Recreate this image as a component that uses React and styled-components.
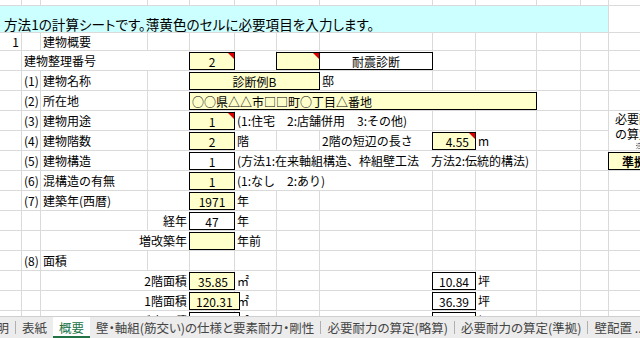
import React from 'react';
import styled, { createGlobalStyle, css } from 'styled-components';

const GRID = '#dadada';
const YELLOW = '#ffffcc';
const FONT = `"Noto Sans CJK JP", "Noto Sans", sans-serif`;

const COLS = [22, 19, 107, 42, 45, 42, 43, 113, 43, 61, 44, 28, 48];
const ROWS = [6, 27, 18, 20, 20, 20, 20, 20, 20, 20, 20, 20, 20, 20, 20, 20, 20];
const JUSTIFY = { left: 'flex-start', center: 'center', right: 'flex-end' };

const GlobalStyle = createGlobalStyle`
  html, body { margin: 0; padding: 0; background: #fff; }
  body { font-family: ${FONT}; color: #000; overflow: hidden; }
`;

const Page = styled.div`
  width: 640px;
  height: 338px;
  display: flex;
  flex-direction: column;
  overflow: hidden;
`;

const Sheet = styled.div`
  flex: 1 1 auto;
  min-height: 0;
  overflow: hidden;
  display: grid;
  grid-template-columns: ${COLS.map((w) => `${w}px`).join(' ')};
  grid-template-rows: ${ROWS.map((h) => `${h}px`).join(' ')};
  align-content: start;
  font-size: 12px;
`;

const Cell = styled.div`
  grid-column: span ${(p) => p.$span || 1};
  grid-row: span ${(p) => p.$rows || 1};
  box-sizing: border-box;
  min-width: 0;
  border-right: 1px solid ${GRID};
  border-bottom: 1px solid ${GRID};
  display: flex;
  align-items: ${(p) => (p.$box ? 'flex-start' : 'center')};
  justify-content: ${(p) => JUSTIFY[p.$align || 'left']};
  padding: 0 ${(p) => (p.$box ? 0 : 2)}px;
  white-space: nowrap;
  overflow: ${(p) => (p.$box ? 'visible' : 'hidden')};
`;

const TitleCell = styled(Cell)`
  background: #ccffff;
  align-items: flex-end;
  padding: 0 0 0 4px;
  font-size: 13.6px;
  line-height: 16px;
  font-feature-settings: "palt";
`;

const SideNote = styled(Cell)`
  display: block;
  padding: 0 0 0 6px;
  line-height: 15px;
`;

const SideSmall = styled.div`
  font-size: 8px;
  line-height: 9px;
  padding-left: 20px;
`;

const InputBox = styled.div`
  position: relative;
  flex: 1 1 auto;
  height: 18px;
  margin: 1px -1px 0 -1px;
  box-sizing: border-box;
  border: 1px solid #000;
  background: ${(p) => (p.$fill === 'white' ? '#fff' : YELLOW)};
  display: flex;
  align-items: center;
  justify-content: ${(p) => JUSTIFY[p.$align || 'center']};
  padding: 0 ${(p) => (p.$align === 'right' ? 6 : 2)}px;
  font-weight: ${(p) => (p.$bold ? 700 : 400)};
  ${(p) =>
    p.$note &&
    css`
      &::after {
        content: '';
        position: absolute;
        top: 0;
        right: 0;
        border-top: 6px solid #dd0000;
        border-left: 6px solid transparent;
      }
    `}
`;

const TabBar = styled.div`
  flex: 0 0 22px;
  box-sizing: border-box;
  display: flex;
  align-items: stretch;
  background: #ececec;
  border-top: 1px solid #cfcfcf;
  overflow: hidden;
  font-size: 12.5px;
  color: #444;
  font-feature-settings: "palt";
`;

const TabStrip = styled.div`
  display: flex;
  align-items: stretch;
  margin-left: -22px;
`;

const Tab = styled.div`
  display: flex;
  align-items: center;
  padding: 0 6px;
  white-space: nowrap;
  ${(p) =>
    p.$active &&
    css`
      background: #fff;
      color: #217346;
      box-shadow: inset 0 -2px 0 #217346;
    `}
`;

const TabDivider = styled.div`
  width: 1px;
  background: #b0b0b0;
  margin: 4px 0;
`;

const e = (n) => Array.from({ length: n }, () => ({}));
const box = (text, opts = {}) => ({ box: { text, ...opts } });

const ROW_DATA = [
  e(13),
  [{ kind: 'title', span: 12, text: '方法1の計算シートです。薄黄色のセルに必要項目を入力します。' }, {}],
  [{ text: '1', align: 'right' }, {}, { text: '建物概要' }, ...e(10)],
  [
    {},
    { span: 3, text: '建物整理番号' },
    box('2', { note: true }),
    {},
    box('', { note: true }),
    box('耐震診断', { fill: 'white' }),
    ...e(5),
  ],
  [{}, { text: '(1)' }, { text: '建物名称' }, {}, { span: 3, ...box('診断例B') }, { text: '邸' }, ...e(5)],
  [
    {},
    { text: '(2)' },
    { text: '所在地' },
    {},
    { span: 6, ...box('○○県△△市□□町○丁目△番地', { align: 'left' }) },
    ...e(3),
  ],
  [
    {},
    { text: '(3)' },
    { text: '建物用途' },
    {},
    box('1', { note: true }),
    { span: 3, text: '(1:住宅　2:店舗併用　3:その他)' },
    ...e(4),
    { kind: 'side', rows: 2 },
  ],
  [
    {},
    { text: '(4)' },
    { text: '建物階数' },
    {},
    box('2'),
    { text: '階' },
    {},
    { text: '2階の短辺の長さ' },
    box('4.55', { align: 'right', note: true }),
    { text: 'm' },
    {},
    {},
  ],
  [
    {},
    { text: '(5)' },
    { text: '建物構造' },
    {},
    box('1', { fill: 'white' }),
    { span: 5, text: '(方法1:在来軸組構造、枠組壁工法　方法2:伝統的構法)' },
    {},
    {},
    box('準拠', { align: 'left', bold: true, pad: true }),
  ],
  [{}, { text: '(6)' }, { text: '混構造の有無' }, {}, box('1'), { span: 3, text: '(1:なし　2:あり)' }, ...e(5)],
  [{}, { text: '(7)' }, { text: '建築年(西暦)' }, {}, box('1971'), { text: '年' }, ...e(7)],
  [{}, {}, {}, { text: '経年', align: 'right' }, box('47', { fill: 'white' }), { text: '年' }, ...e(7)],
  [{}, {}, { span: 2, text: '増改築年', align: 'right' }, box(''), { text: '年前' }, ...e(7)],
  [{}, { text: '(8)' }, { text: '面積' }, ...e(10)],
  [
    {},
    {},
    { span: 2, text: '2階面積', align: 'right' },
    box('35.85', { align: 'right' }),
    { text: '㎡' },
    {},
    {},
    box('10.84', { align: 'right', fill: 'white' }),
    { text: '坪' },
    ...e(3),
  ],
  [
    {},
    {},
    { span: 2, text: '1階面積', align: 'right' },
    box('120.31', { align: 'right' }),
    { text: '㎡' },
    {},
    {},
    box('36.39', { align: 'right', fill: 'white' }),
    { text: '坪' },
    ...e(3),
  ],
  [
    {},
    {},
    { span: 2, text: '延床面積', align: 'right' },
    box('156.16', { align: 'right', fill: 'white' }),
    { text: '㎡' },
    {},
    {},
    box('47.24', { align: 'right', fill: 'white' }),
    { text: '坪' },
    ...e(3),
  ],
];

const TABS = [
  '説明',
  '表紙',
  '概要',
  '壁・軸組(筋交い)の仕様と要素耐力・剛性',
  '必要耐力の算定(略算)',
  '必要耐力の算定(準拠)',
  '壁配置 ..',
];

function SheetCell({ cell }) {
  if (cell.kind === 'title') {
    return <TitleCell $span={cell.span}>{cell.text}</TitleCell>;
  }
  if (cell.kind === 'side') {
    return (
      <SideNote $rows={cell.rows}>
        <div>必要耐力</div>
        <div>の算定方法</div>
        <SideSmall>※</SideSmall>
      </SideNote>
    );
  }
  if (cell.box) {
    const b = cell.box;
    return (
      <Cell $span={cell.span} $box>
        <InputBox
          $fill={b.fill}
          $align={b.align}
          $note={b.note}
          $bold={b.bold}
          style={b.pad ? { paddingLeft: 13 } : undefined}
        >
          {b.text}
        </InputBox>
      </Cell>
    );
  }
  return (
    <Cell $span={cell.span} $align={cell.align}>
      {cell.text}
    </Cell>
  );
}

export default function App() {
  return (
    <>
      <GlobalStyle />
      <Page>
        <Sheet>
          {ROW_DATA.map((row, r) =>
            row.map((cell, c) => <SheetCell key={`${r}-${c}`} cell={cell} />)
          )}
        </Sheet>
        <TabBar>
          <TabStrip>
            {TABS.map((t, i) => (
              <React.Fragment key={t}>
                {i > 0 && i !== 2 && i !== 3 && <TabDivider />}
                <Tab $active={i === 2}>{t}</Tab>
              </React.Fragment>
            ))}
          </TabStrip>
        </TabBar>
      </Page>
    </>
  );
}
